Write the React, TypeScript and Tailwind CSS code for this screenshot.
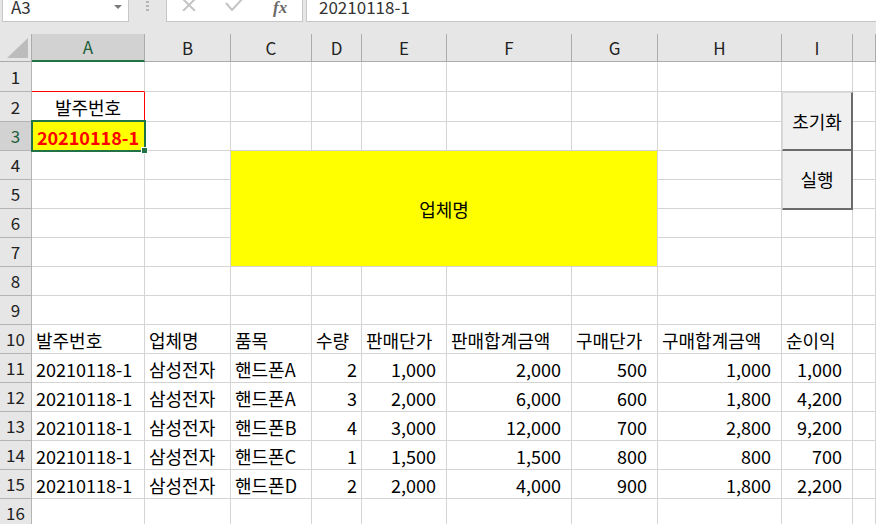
import React from "react"

const font = "font-['Noto_Sans_CJK_KR','Noto_Sans',sans-serif]"

const colLetters = ["A", "B", "C", "D", "E", "F", "G", "H", "I", ""]

type Cell = { t: string; align?: "l" | "r"; pr?: string }

// rows 10..15 of the sheet
const table: Cell[][] = [
  [
    { t: "발주번호" },
    { t: "업체명" },
    { t: "품목" },
    { t: "수량" },
    { t: "판매단가" },
    { t: "판매합계금액" },
    { t: "구매단가" },
    { t: "구매합계금액" },
    { t: "순이익" },
  ],
  ...[
    ["핸드폰A", "2", "1,000", "2,000", "500", "1,000", "1,000"],
    ["핸드폰A", "3", "2,000", "6,000", "600", "1,800", "4,200"],
    ["핸드폰B", "4", "3,000", "12,000", "700", "2,800", "9,200"],
    ["핸드폰C", "1", "1,500", "1,500", "800", "800", "700"],
    ["핸드폰D", "2", "2,000", "4,000", "900", "1,800", "2,200"],
  ].map((r) => [
    { t: "20210118-1" },
    { t: "삼성전자" },
    { t: r[0] },
    { t: r[1], align: "r" as const, pr: "pr-[4px]" },
    ...r.slice(2).map((v) => ({ t: v, align: "r" as const, pr: "pr-[10px]" })),
  ]),
]

function GridCell({ children, className = "" }: { children?: React.ReactNode; className?: string }) {
  return (
    <div className={`flex items-center border-r border-b border-[#d4d4d4] whitespace-nowrap ${className}`}>
      {children}
    </div>
  )
}

function FormulaBar() {
  return (
    <div className="flex items-start h-[34px] text-[17px] text-[#333]">
      <div className="ml-[2px] w-[127px] h-[22px] flex items-start justify-between pl-[8px] pr-[6px] bg-white border-x border-b border-[#c6c6c6]">
        <span className="leading-[13px]">A3</span>
        <div className="mt-[5px] w-0 h-0 border-l-[4px] border-r-[4px] border-t-[4px] border-l-transparent border-r-transparent border-t-[#7a7a7a]" />
      </div>
      <div className="ml-[17px] w-[20px] flex flex-col items-start gap-[2px] pt-[1px]">
        <div className="w-[3px] h-[2px] bg-[#b5b5b5]" />
        <div className="w-[3px] h-[2px] bg-[#b5b5b5]" />
        <div className="w-[3px] h-[2px] bg-[#b5b5b5]" />
      </div>
      <div className="w-[137px] h-[22px] flex items-start pl-[14px] gap-[28px] bg-white border-x border-b border-[#c6c6c6]">
        <svg className="mt-[-1px]" width="16" height="12" viewBox="0 0 16 12">
          <path d="M2 0 L14 12 M14 0 L2 12" stroke="#c4c4c4" strokeWidth="2" fill="none" />
        </svg>
        <svg className="mt-[-1px]" width="20" height="12" viewBox="0 0 20 12">
          <path d="M1 4 L7 11 L19 -2" stroke="#c4c4c4" strokeWidth="2" fill="none" />
        </svg>
        <span className="font-['Liberation_Serif',serif] italic font-bold text-[17px] text-[#6a6a6a] leading-[15px]">
          fx
        </span>
      </div>
      <div className="ml-[3px] flex-1 h-[22px] pl-[12px] bg-white border-l border-b border-[#c6c6c6]">
        <span className="leading-[13px] block">20210118-1</span>
      </div>
    </div>
  )
}

export default function App() {
  const cells: React.ReactNode[] = []

  // header row
  cells.push(
    <div key="corner" className="flex items-end justify-end pr-[3px] pb-[3px] bg-[#e6e6e6] border-r border-b border-[#ababab]">
      <div className="w-0 h-0 border-l-[21px] border-l-transparent border-b-[20px] border-b-[#bcbcbc]" />
    </div>
  )
  colLetters.forEach((c, i) =>
    cells.push(
      <div
        key={"h" + i}
        className={
          i === 0
            ? "flex items-center justify-center bg-[#d2d2d2] border-r border-[#ababab] border-b-2 border-b-[#217346] text-[#1d5f3a] text-[17px]"
            : "flex items-center justify-center bg-[#e6e6e6] border-r border-b border-[#ababab] text-[#222] text-[17px]"
        }
      >
        {c}
      </div>
    )
  )

  for (let r = 1; r <= 16; r++) {
    cells.push(
      <div
        key={"r" + r}
        className={
          r === 3
            ? "flex items-center justify-center bg-[#d2d2d2] border-r border-b border-[#b4b4b4] text-[#1d5f3a] text-[17px]"
            : "flex items-center justify-center bg-[#e6e6e6] border-r border-b border-[#b4b4b4] text-[#222] text-[17px]"
        }
      >
        {r}
      </div>
    )
    for (let c = 0; c < 10; c++) {
      if (r >= 4 && r <= 7 && c >= 2 && c <= 6) continue
      const key = `c${r}-${c}`
      if (r === 1 && c === 0) {
        cells.push(<GridCell key={key} className="border-b-[#ff0000]" />)
      } else if (r === 2 && c === 0) {
        cells.push(
          <GridCell key={key} className="justify-center border-r-[#ff0000] pt-[2px]">
            발주번호
          </GridCell>
        )
      } else if (r === 3 && c === 0) {
        cells.push(
          <GridCell key={key} className="justify-center bg-[#ffff00] text-[#ff0000] font-bold pt-[2px]">
            20210118-1
          </GridCell>
        )
      } else if (r >= 10 && r <= 15 && c < 9) {
        const cell = table[r - 10][c]
        cells.push(
          <GridCell
            key={key}
            className={`pt-[3px] ${cell.align === "r" ? `justify-end ${cell.pr}` : "pl-[4px]"}`}
          >
            {cell.t}
          </GridCell>
        )
      } else {
        cells.push(<GridCell key={key} />)
      }
    }
  }

  return (
    <div className={`relative w-[876px] h-[524px] overflow-hidden bg-[#e6e6e6] text-black text-[18px] ${font}`}>
      <FormulaBar />

      {/* sheet */}
      <div className="relative grid grid-cols-[32px_113px_86px_81px_50px_85px_125px_86px_124px_71px_1fr] grid-rows-[28px_30px_30px_repeat(14,29px)] bg-white">
        <div className="col-start-4 col-span-5 row-start-5 row-span-4 flex items-center justify-center bg-[#ffff00] border-r border-b border-[#d4d4d4] pt-[2px]">
          업체명
        </div>
        {cells}

        {/* selection on A3 */}
        <div className="absolute left-[31px] top-[86px] w-[115px] h-[32px] border-2 border-[#217346] pointer-events-none" />
        <div className="absolute left-[141px] top-[113px] w-[7px] h-[7px] bg-[#217346] border border-white" />

        {/* form buttons floating over the sheet */}
        <div className="absolute left-[782px] top-[58px] w-[71px] flex flex-col">
          <div className="h-[59px] flex items-center justify-center bg-[#f0f0f0] border-l border-t border-[#dadada] border-r-2 border-b-2 border-r-[#6b6b6b] border-b-[#6b6b6b]">
            초기화
          </div>
          <div className="h-[59px] flex items-center justify-center bg-[#f0f0f0] border-l border-[#dadada] border-r-2 border-b-2 border-r-[#6b6b6b] border-b-[#6b6b6b]">
            실행
          </div>
        </div>
      </div>
    </div>
  )
}
